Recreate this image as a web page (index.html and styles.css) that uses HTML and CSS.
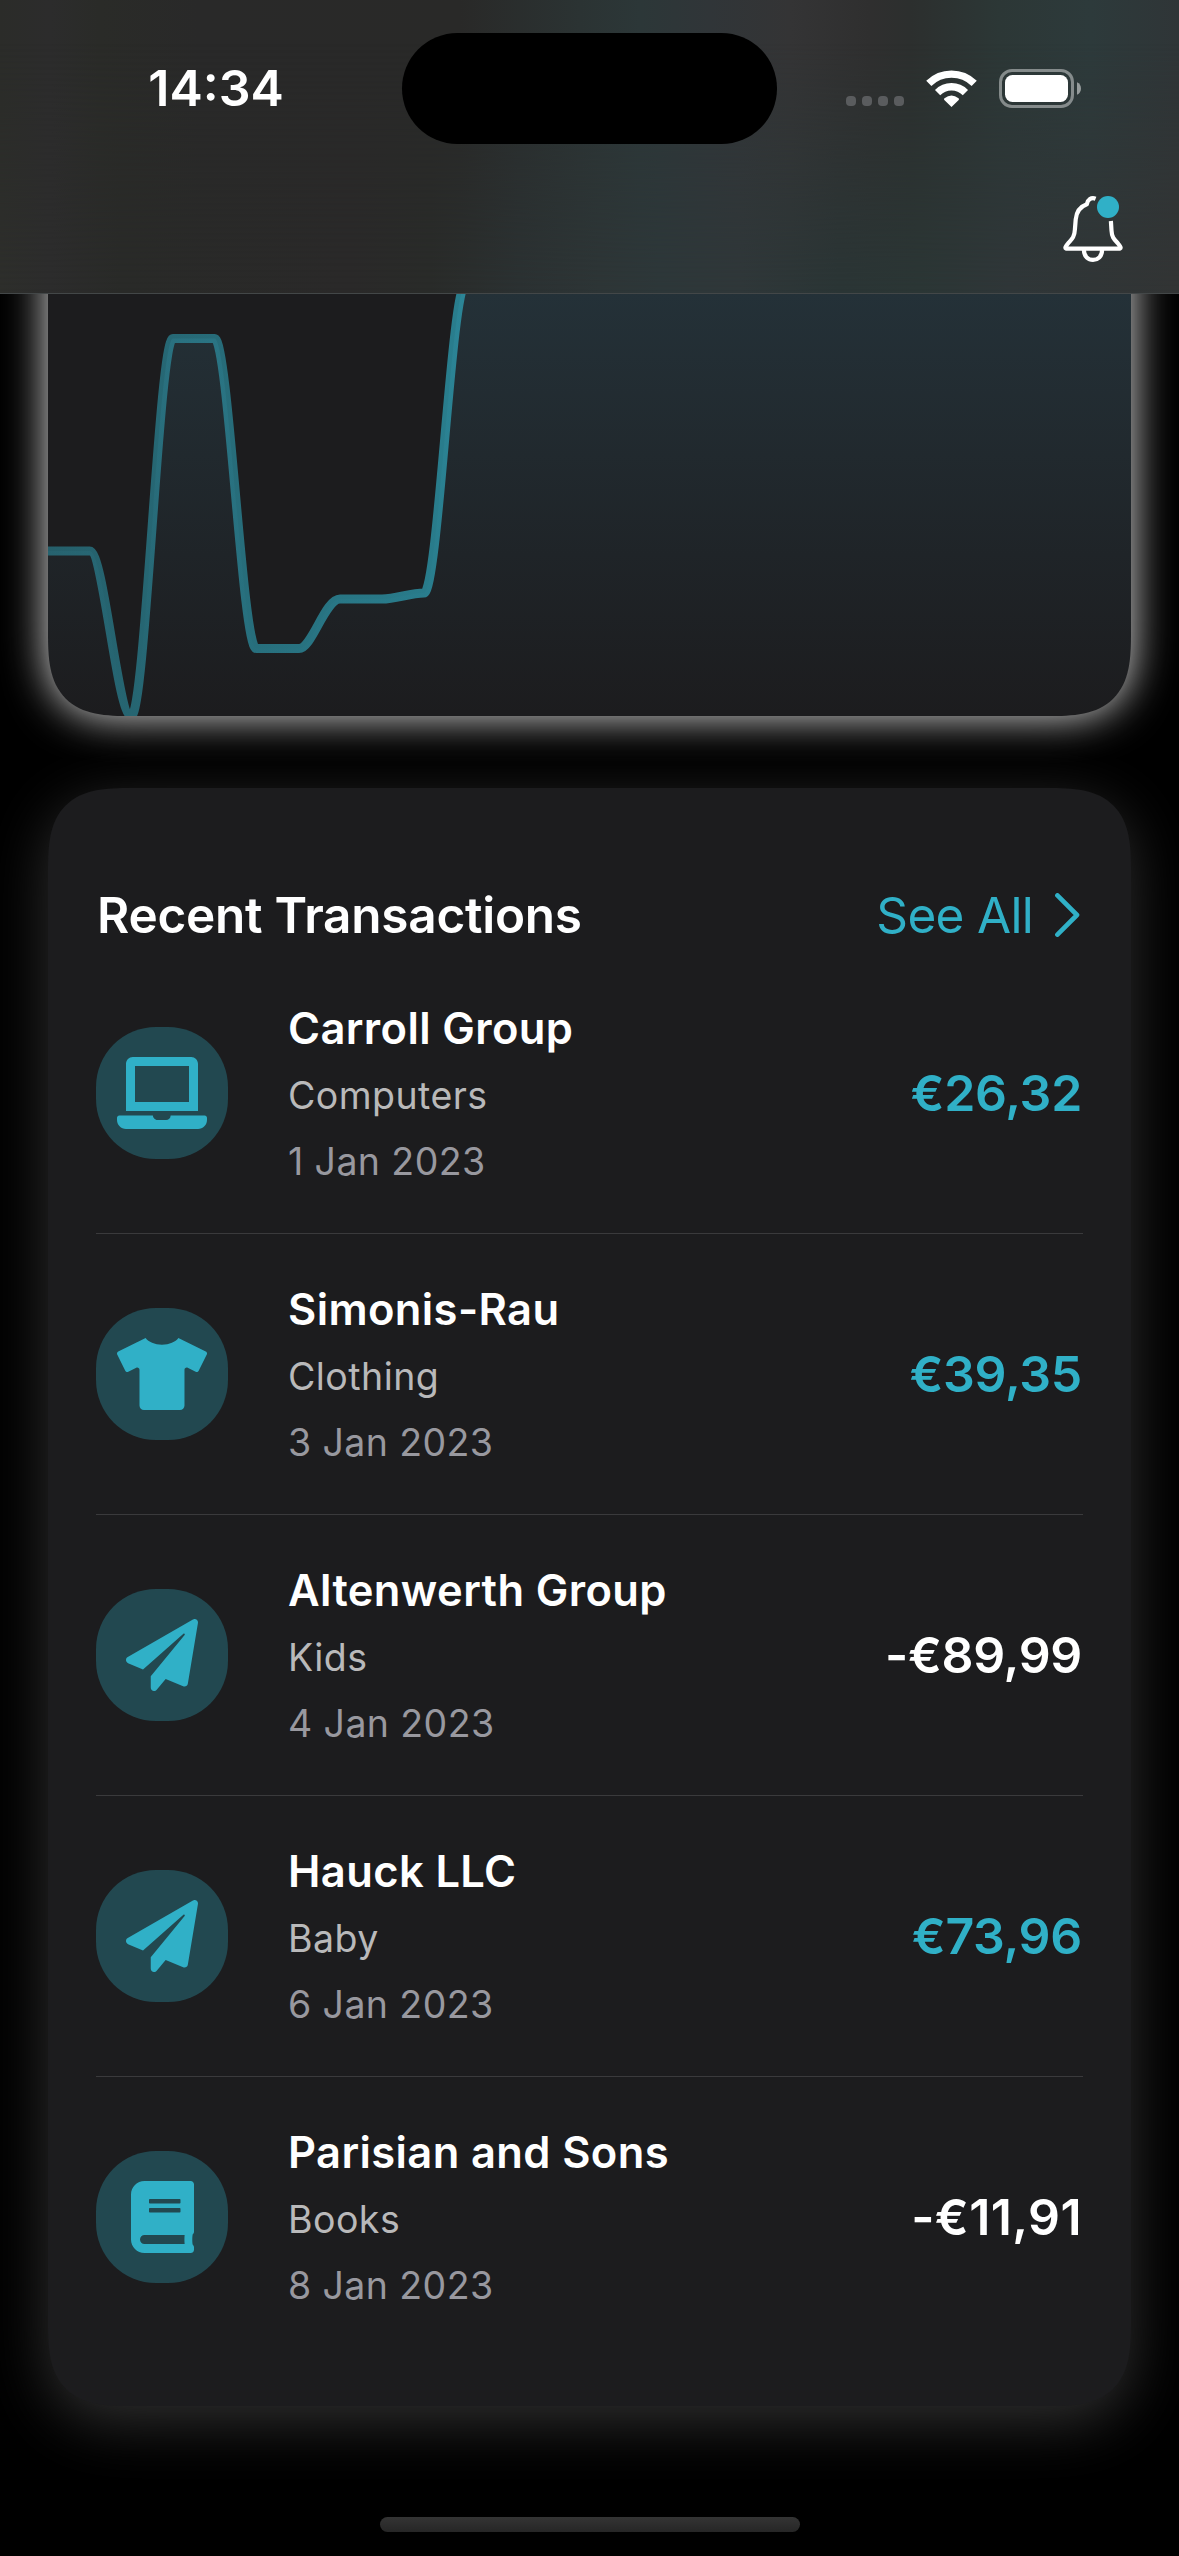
FILE: index.html
```html
<!DOCTYPE html>
<html lang="en">
<head>
<meta charset="utf-8">
<title>Recent Transactions</title>
<link rel="stylesheet" href="styles.css">
</head>
<body>
<div class="screen">
  <header class="topbar">
    <div class="status">
      <span class="clock">14:34</span>
      <span class="island"></span>
      <div class="indicators">
        <span class="signal"><i></i><i></i><i></i><i></i></span>
        <svg class="wifi" viewBox="0 0 51 37" width="51" height="37">
          <g fill="none" stroke="#fff" stroke-width="7.4">
            <path d="M2.8 13.4A32.5 32.5 0 0 1 48.2 13.4"/>
            <path d="M11.6 22.6A19.6 19.6 0 0 1 39.4 22.6"/>
          </g>
          <path d="M25.5 37l-7.2-7.1q-.8-.9.2-1.7 7-5.6 14 0 1 .8.2 1.7z" fill="#fff"/>
        </svg>
        <svg class="battery" viewBox="0 0 82 39" width="82" height="39">
          <rect x="1.5" y="1.5" width="72" height="36" rx="11.5" fill="none" stroke="#fff" stroke-opacity=".42" stroke-width="3"/>
          <rect x="6" y="6" width="63" height="27" rx="7.5" fill="#fff"/>
          <path d="M78 13.3c5.3 1.8 5.3 10.6 0 12.4z" fill="#fff" fill-opacity=".5"/>
        </svg>
      </div>
    </div>
    <div class="toolbar">
      <svg class="bell" viewBox="0 0 60 66" width="60" height="66">
        <g fill="none" stroke="#fff" stroke-width="4.2" stroke-linejoin="round">
          <path d="M32.6 2.7C28.3 1 24.6 3.600 23.800 8.300C16.800 10.800 13.400 16 12.700 23.500L11.900 33.500C11.500 41.500 8.500 43.500 5.100 47.300C1.400 51.500 1.800 52.700 4.300 52.700H55.700C58.200 52.700 58.600 51.500 54.900 47.300C51.500 43.500 48.800 41.500 48.500 34.500L47.900 25"/>
          <path d="M20.900 54C20.900 67.200 39.100 67.200 39.100 54"/>
        </g>
        <circle cx="45" cy="11" r="11" fill="#30b0c7"/>
      </svg>
    </div>
  </header>

  <main class="content">
    <section class="chart-card">
      <svg class="chart" viewBox="48 294 1083 422" width="1083" height="422">
        <defs>
          <linearGradient id="line" gradientUnits="userSpaceOnUse" x1="48" y1="0" x2="1131" y2="0">
            <stop offset="0" stop-color="#30b0c7" stop-opacity=".45"/>
            <stop offset="1" stop-color="#30b0c7" stop-opacity="1"/>
          </linearGradient>
          <linearGradient id="area" gradientUnits="userSpaceOnUse" x1="0" y1="294" x2="0" y2="716">
            <stop offset="0" stop-color="#51a8cb" stop-opacity=".15"/>
            <stop offset="1" stop-color="#51a8cb" stop-opacity="0"/>
          </linearGradient>
        </defs>
        <path fill="url(#area)" d="M48 551H89.700C103.600 551 117.400 716 131.300 716C145.100 716 159 338.500 172.900 338.500H214.600C228.500 338.500 242.300 648.500 256.200 648.500H299C312 648.500 325 599 340 599H382C396 599 410 593 424 593C438 593 451.500 284 465.500 284H1131V716H48Z"/>
        <path fill="none" stroke="url(#line)" stroke-width="9" stroke-linejoin="round" d="M48 551H89.700C103.600 551 117.400 716 131.300 716C145.100 716 159 338.500 172.900 338.500H214.600C228.500 338.500 242.300 648.500 256.200 648.500H299C312 648.500 325 599 340 599H382C396 599 410 593 424 593C438 593 451.500 284 465.500 284"/>
      </svg>
    </section>

    <section class="list-card">
      <div class="list-head">
        <h1 class="title">Recent Transactions</h1>
        <a class="see-all"><span>See All</span>
          <svg viewBox="0 0 25 44" width="25" height="44"><path d="M2.400 2.400L22 22L2.400 41.600" fill="none" stroke="#30b0c7" stroke-width="4.600" stroke-linecap="round" stroke-linejoin="round"/></svg>
        </a>
      </div>

      <article class="row">
        <div class="badge"><svg viewBox="0 0 640 512" width="90" height="72"><path d="M624 416H381.540c-.74 19.810-14.710 32-32.740 32H288c-18.690 0-33.020-17.470-32.770-32H16c-8.800 0-16 7.200-16 16v16c0 35.200 28.800 64 64 64h512c35.200 0 64-28.800 64-64v-16c0-8.800-7.200-16-16-16zM576 48c0-26.400-21.600-48-48-48H112C85.600 0 64 21.600 64 48v336h512V48zm-64 272H128V64h384v256z"/></svg></div>
        <div class="info"><h2 class="name">Carroll Group</h2><p class="category">Computers</p><p class="date">1 Jan 2023</p></div>
        <div class="amount income">€26,32</div>
      </article>
      <article class="row">
        <div class="badge"><svg viewBox="0 0 640 512" width="90" height="72"><path d="M631.200 96.500L436.500 0C416.400 27.800 371.900 47.200 320 47.200S223.600 27.800 203.500 0L8.800 96.500c-7.900 4-11.100 13.600-7.200 21.500l57.200 114.500c4 7.900 13.600 11.100 21.500 7.200l56.600-27.700c10.600-5.200 23 2.500 23 14.400V480c0 17.700 14.300 32 32 32h256c17.700 0 32-14.300 32-32V226c0-11.800 12.400-19.600 23-14.400l56.600 27.700c7.900 4 17.500.8 21.500-7.200L638.300 118c4-7.900.8-17.600-7.100-21.500z"/></svg></div>
        <div class="info"><h2 class="name">Simonis-Rau</h2><p class="category">Clothing</p><p class="date">3 Jan 2023</p></div>
        <div class="amount income">€39,35</div>
      </article>
      <article class="row">
        <div class="badge"><svg viewBox="0 0 512 512" width="72" height="72"><path d="M476 3.200L12.500 270.600c-18.100 10.400-15.800 35.600 2.200 43.200L121 358.400l287.300-253.200c5.500-4.900 13.300 2.600 8.600 8.300L176 407v80.500c0 23.600 28.500 32.900 42.500 15.800L282 426l124.600 52.200c14.200 6 30.400-2.900 33-18.200l72-432C515 7.800 493.300-6.800 476 3.200z"/></svg></div>
        <div class="info"><h2 class="name">Altenwerth Group</h2><p class="category">Kids</p><p class="date">4 Jan 2023</p></div>
        <div class="amount">-€89,99</div>
      </article>
      <article class="row">
        <div class="badge"><svg viewBox="0 0 512 512" width="72" height="72"><path d="M476 3.200L12.500 270.600c-18.100 10.400-15.800 35.600 2.200 43.200L121 358.400l287.300-253.200c5.500-4.900 13.300 2.600 8.600 8.300L176 407v80.500c0 23.600 28.500 32.900 42.500 15.800L282 426l124.600 52.200c14.200 6 30.400-2.900 33-18.200l72-432C515 7.800 493.300-6.800 476 3.200z"/></svg></div>
        <div class="info"><h2 class="name">Hauck LLC</h2><p class="category">Baby</p><p class="date">6 Jan 2023</p></div>
        <div class="amount income">€73,96</div>
      </article>
      <article class="row">
        <div class="badge"><svg viewBox="0 0 448 512" width="63" height="72"><path d="M448 360V24c0-13.300-10.700-24-24-24H96C43 0 0 43 0 96v320c0 53 43 96 96 96h328c13.300 0 24-10.700 24-24v-16c0-7.500-3.500-14.300-8.900-18.700-4.200-15.400-4.200-59.300 0-74.700 5.400-4.300 8.900-11.100 8.900-18.600zM128 134c0-3.300 2.700-6 6-6h212c3.300 0 6 2.700 6 6v20c0 3.300-2.700 6-6 6H134c-3.300 0-6-2.700-6-6v-20zm0 64c0-3.300 2.700-6 6-6h212c3.300 0 6 2.700 6 6v20c0 3.300-2.700 6-6 6H134c-3.300 0-6-2.700-6-6v-20zm253.400 250H96c-17.700 0-32-14.300-32-32 0-17.600 14.400-32 32-32h285.400c-1.900 17.100-1.900 46.900 0 64z"/></svg></div>
        <div class="info"><h2 class="name">Parisian and Sons</h2><p class="category">Books</p><p class="date">8 Jan 2023</p></div>
        <div class="amount loose">-€11,91</div>
      </article>
    </section>
  </main>
  <div class="home-indicator"></div>
</div>
</body>
</html>
```
FILE: styles.css
```css
* { box-sizing: border-box; }

body {
  margin: 0;
  background: #000;
  color: #fff;
  font-family: Inter, "Liberation Sans", sans-serif;
}

h1, h2, p { margin: 0; }
svg { display: block; }

.screen {
  display: flex;
  flex-direction: column;
  width: 1179px;
  height: 2556px;
  overflow: hidden;
  background: #000;
}

.topbar {
  position: relative;
  z-index: 1;
  flex: none;
  height: 294px;
  border-bottom: 1px solid #434748;
  background: linear-gradient(90deg, #2b2c29 0, #2c2c2c 50px, #2a2b28 100px, #292929 200px, #292928 460px, #2b3333 580px, #2c3738 640px, #303538 710px, #343435 790px, #2f2f2f 870px, #2c2f2e 910px, #2c3736 1000px, #2d3a3b 1090px, #2f3537 1179px);
}

.topbar::before {
  content: "";
  position: absolute;
  inset: 0;
  z-index: -1;
  background: linear-gradient(90deg, #2d2e2b 0, #2c2c2c 50px, #292a28 120px, #2a2929 350px, #292b29 430px, #2b3132 520px, #2d3536 600px, #2d3739 660px, #2f3739 740px, #2a3535 840px, #2b3635 920px, #2f3638 1010px, #323434 1179px);
  -webkit-mask-image: linear-gradient(transparent 15%, #000 100%);
  mask-image: linear-gradient(transparent 15%, #000 100%);
}

.status {
  display: grid;
  grid-template-columns: 401px 376px 402px;
  align-items: center;
  height: 176px;
}

.clock {
  padding-left: 31px;
  text-align: center;
  font-size: 50px;
  font-weight: 600;
  line-height: 60px;
}

.island {
  height: 111px;
  margin: 1px 0 0 1px;
  border-radius: 56px;
  background: #000;
}

.indicators {
  display: flex;
  align-items: center;
  padding-left: 69px;
}

.signal { display: flex; gap: 6px; margin: 26px 22px 0 0; }
.signal i { width: 10px; height: 10px; border-radius: 4px; background: #5a5c5e; }
.wifi { margin-right: 22px; }

.toolbar {
  display: flex;
  justify-content: flex-end;
  padding: 20px 56px 0 0;
}

.content {
  display: flex;
  flex-direction: column;
  gap: 72px;
  flex: none;
  padding: 0 48px;
}

/* The card continues upwards underneath the top bar. */
.chart-card {
  display: flex;
  align-items: flex-end;
  height: 622px;
  margin-top: -200px;
  overflow: hidden;
  border-radius: 61px;
  background: #1c1c1e;
  box-shadow: 0 0 43px rgba(255, 255, 255, .88);
}

.list-card {
  padding: 97px 48px 48px;
  border-radius: 61px;
  background: #1c1c1e;
  box-shadow: 0 15px 60px rgba(255, 255, 255, .19);
}

/* Continuous corners where the browser can draw them. */
@supports (corner-shape: superellipse(1.56)) {
  .chart-card,
  .list-card {
    border-radius: 84px;
    corner-shape: superellipse(1.56);
  }
}

.list-head {
  display: flex;
  align-items: center;
  justify-content: space-between;
  height: 60px;
  margin-bottom: 8px;
}

.title {
  padding-left: 1px;
  font-size: 49.5px;
  font-weight: 600;
  line-height: 60px;
  letter-spacing: -.25px;
}

.see-all {
  display: flex;
  align-items: center;
  gap: 22px;
  padding-right: 3px;
  color: #30b0c7;
  font-size: 49.5px;
  line-height: 60px;
  letter-spacing: -.7px;
}

.row {
  display: flex;
  align-items: center;
  height: 281px;
  border-bottom: 1px solid #3a3a3c;
}

.row:last-child { border-bottom-color: transparent; }

.badge {
  display: flex;
  align-items: center;
  justify-content: center;
  width: 132px;
  height: 132px;
  margin-right: 60px;
  border-radius: 60px;
  background: #224850;
}

.badge svg { fill: #30b0c7; }

.info { flex: 1; padding-top: 1px; }
.name { font-size: 43.5px; font-weight: 600; line-height: 69px; letter-spacing: .38px; }
.category { color: #b9b9ba; font-size: 37.5px; line-height: 66px; letter-spacing: .45px; }
.date { color: #98989f; font-size: 37.5px; line-height: 65px; letter-spacing: .4px; }

.amount {
  padding-right: 1px;
  font-size: 50px;
  font-weight: 600;
  line-height: 60px;
  letter-spacing: -.3px;
}
.loose { letter-spacing: .4px; }
.income { color: #30b0c7; }

.home-indicator {
  flex: none;
  width: 420px;
  height: 15px;
  margin: 111px auto 0;
  border-radius: 8px;
  background: linear-gradient(#343434, #262626);
}
```
